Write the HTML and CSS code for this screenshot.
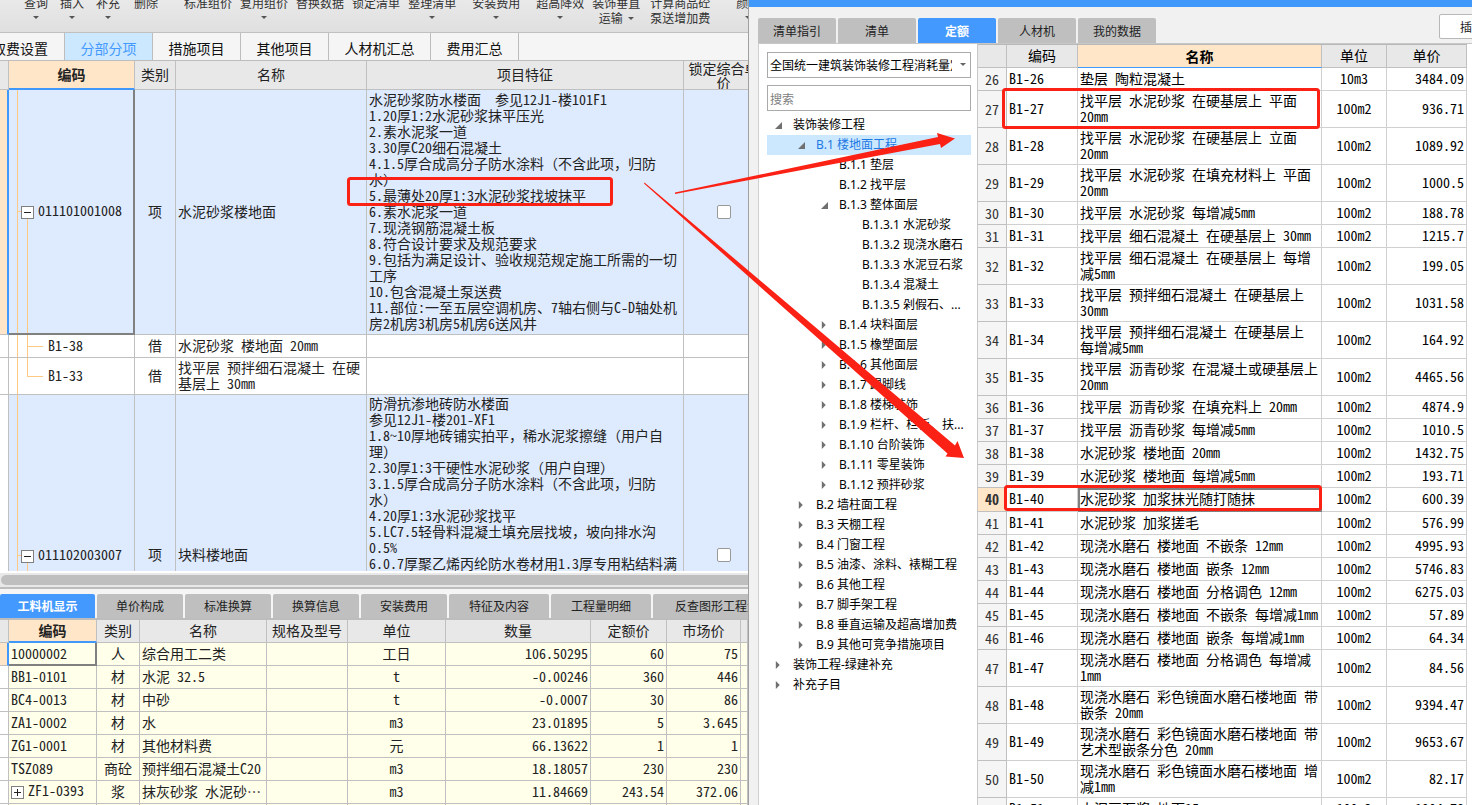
FILE: index.html
```html
<!DOCTYPE html>
<html lang="zh-CN">
<head>
<meta charset="utf-8">
<title>分部分项</title>
<link rel="stylesheet" href="styles.css">
</head>
<body>
<main class="app">
  <section class="editor">
    <header class="toolbar">
      <div class="group g12"><button class="drop">查询</button><button class="drop">插入</button><button class="drop">补充</button></div>
      <div class="group ml14"><button>删除</button></div>
      <div class="group g8 ml26"><button>标准组价</button><button class="drop">复用组价</button><button>替换数据</button><button>锁定清单</button><button class="drop">整理清单</button></div>
      <div class="group g16 ml16"><button class="drop">安装费用</button><button class="drop">超高降效</button></div>
      <div class="group g10 ml8"><button class="side">装饰垂直<br>运输</button><button>计算商品砼<br>泵送增加费</button></div>
      <div class="group ml26"><button class="drop">颜色</button></div>
    </header>
    <nav class="pages">
      <button class="first">取费设置</button><button class="on">分部分项</button><button>措施项目</button><button>其他项目</button><button class="wide">人材机汇总</button><button>费用汇总</button>
    </nav>
    <div class="bill">
      <table class="grid bill-grid">
        <colgroup><col class="w9"><col class="w126"><col class="w41"><col><col class="w317"><col class="w80"></colgroup>
        <thead><tr><th></th><th class="cur">编码</th><th>类别</th><th>名称</th><th>项目特征</th><th class="two">锁定综合单<br>价</th></tr></thead>
        <tbody>
          <tr class="item big"><td class="mark"></td><td class="node parent active"><button class="box" aria-label="折叠"><svg viewBox="0 0 11 11"><path d="M2 5.5h7"/></svg></button>011101001008</td><td class="c">项</td><td>水泥砂浆楼地面</td>
            <td>水泥砂浆防水楼面　参见12J1-楼101F1<br>1.20厚1:2水泥砂浆抹平压光<br>2.素水泥浆一道<br>3.30厚C20细石混凝土<br>4.1.5厚合成高分子防水涂料（不含此项，归防<br>水）<br>5.最薄处20厚1:3水泥砂浆找坡抹平<br>6.素水泥浆一道<br>7.现浇钢筋混凝土板<br>8.符合设计要求及规范要求<br>9.包括为满足设计、验收规范规定施工所需的一切<br>工序<br>10.包含混凝土泵送费<br>11.部位:一至五层空调机房、7轴右侧与C-D轴处机<br>房2机房3机房5机房6送风井</td>
            <td class="c"><input type="checkbox" aria-label="锁定综合单价"></td></tr>
          <tr><td></td><td class="node child">B1-38</td><td class="c">借</td><td>水泥砂浆 楼地面 20mm</td><td></td><td></td></tr>
          <tr class="double"><td></td><td class="node child last">B1-33</td><td class="c">借</td><td>找平层 预拌细石混凝土 在硬<br>基层上 30mm</td><td></td><td></td></tr>
          <tr class="item huge"><td class="plain"></td><td class="node parent"><button class="box" aria-label="折叠"><svg viewBox="0 0 11 11"><path d="M2 5.5h7"/></svg></button>011102003007</td><td class="c">项</td><td>块料楼地面</td>
            <td class="top">防滑抗渗地砖防水楼面<br>参见12J1-楼201-XF1<br>1.8~10厚地砖铺实拍平，稀水泥浆擦缝（用户自<br>理）<br>2.30厚1:3干硬性水泥砂浆（用户自理）<br>3.1.5厚合成高分子防水涂料（不含此项，归防<br>水）<br>4.20厚1:3水泥砂浆找平<br>5.LC7.5轻骨料混凝土填充层找坡，坡向排水沟<br>0.5%<br>6.0.7厚聚乙烯丙纶防水卷材用1.3厚专用粘结料满</td>
            <td class="c"><input type="checkbox" aria-label="锁定综合单价"></td></tr>
        </tbody>
      </table>
    </div>
    <div class="scroll"><div class="thumb"></div></div>
    <section class="detail">
      <nav class="subtabs"><button class="on">工料机显示</button><button>单价构成</button><button>标准换算</button><button>换算信息</button><button>安装费用</button><button class="wide">特征及内容</button><button class="wide">工程量明细</button><button class="wider">反查图形工程量</button></nav>
      <table class="grid res-grid">
        <colgroup><col class="w9"><col class="w88"><col class="w43"><col class="w127"><col class="w81"><col class="w98"><col><col class="w76"><col class="w74"><col class="w7"></colgroup>
        <thead><tr><th></th><th class="cur">编码</th><th>类别</th><th>名称</th><th>规格及型号</th><th>单位</th><th>数量</th><th>定额价</th><th>市场价</th><th></th></tr></thead>
        <tbody>
          <tr><td class="mark"></td><td class="active">10000002</td><td class="c">人</td><td>综合用工二类</td><td></td><td class="c">工日</td><td class="r">106.50295</td><td class="r">60</td><td class="r">75</td><td></td></tr>
          <tr><td></td><td>BB1-0101</td><td class="c">材</td><td>水泥 32.5</td><td></td><td class="c">t</td><td class="r">-0.00246</td><td class="r">360</td><td class="r">446</td><td></td></tr>
          <tr><td></td><td>BC4-0013</td><td class="c">材</td><td>中砂</td><td></td><td class="c">t</td><td class="r">-0.0007</td><td class="r">30</td><td class="r">86</td><td></td></tr>
          <tr><td></td><td>ZA1-0002</td><td class="c">材</td><td>水</td><td></td><td class="c">m3</td><td class="r">23.01895</td><td class="r">5</td><td class="r">3.645</td><td></td></tr>
          <tr><td></td><td>ZG1-0001</td><td class="c">材</td><td>其他材料费</td><td></td><td class="c">元</td><td class="r">66.13622</td><td class="r">1</td><td class="r">1</td><td></td></tr>
          <tr><td></td><td>TSZ089</td><td class="c">商砼</td><td>预拌细石混凝土C20</td><td></td><td class="c">m3</td><td class="r">18.18057</td><td class="r">230</td><td class="r">230</td><td></td></tr>
          <tr><td></td><td><button class="box" aria-label="展开"><svg viewBox="0 0 11 11"><path d="M2 5.5h7M5.5 2v7"/></svg></button>ZF1-0393</td><td class="c">浆</td><td>抹灰砂浆 水泥砂⋯</td><td></td><td class="c">m3</td><td class="r">11.84669</td><td class="r">243.54</td><td class="r">372.06</td><td></td></tr>
          <tr><td></td><td></td><td></td><td></td><td></td><td></td><td></td><td></td><td></td><td></td></tr>
        </tbody>
      </table>
    </section>
  </section>

  <section class="dialog">
    <div class="titlebar"></div>
    <div class="dialog-head">
      <nav class="dtabs"><button>清单指引</button><button>清单</button><button class="on">定额</button><button>人材机</button><button>我的数据</button></nav>
      <button class="insert">插入</button>
    </div>
    <div class="dialog-body">
      <aside class="side-tree">
        <div class="combo"><select aria-label="定额库"><option>全国统一建筑装饰装修工程消耗量定额</option></select></div>
        <input class="search" type="text" placeholder="搜索" aria-label="搜索">
        <ul class="tree">
          <li class="l0"><i class="open"></i>装饰装修工程</li>
          <li class="l1 sel"><i class="open"></i>B.1 楼地面工程</li>
          <li class="l2"><i></i>B.1.1 垫层</li>
          <li class="l2"><i></i>B.1.2 找平层</li>
          <li class="l2"><i class="open"></i>B.1.3 整体面层</li>
          <li class="l3"><i></i>B.1.3.1 水泥砂浆</li>
          <li class="l3"><i></i>B.1.3.2 现浇水磨石</li>
          <li class="l3"><i></i>B.1.3.3 水泥豆石浆</li>
          <li class="l3"><i></i>B.1.3.4 混凝土</li>
          <li class="l3"><i></i>B.1.3.5 剁假石、...</li>
          <li class="l2"><i class="shut"></i>B.1.4 块料面层</li>
          <li class="l2"><i class="shut"></i>B.1.5 橡塑面层</li>
          <li class="l2"><i class="shut"></i>B.1.6 其他面层</li>
          <li class="l2"><i class="shut"></i>B.1.7 踢脚线</li>
          <li class="l2"><i class="shut"></i>B.1.8 楼梯装饰</li>
          <li class="l2"><i class="shut"></i>B.1.9 栏杆、栏板、扶...</li>
          <li class="l2"><i class="shut"></i>B.1.10 台阶装饰</li>
          <li class="l2"><i class="shut"></i>B.1.11 零星装饰</li>
          <li class="l2"><i class="shut"></i>B.1.12 预拌砂浆</li>
          <li class="l1"><i class="shut"></i>B.2 墙柱面工程</li>
          <li class="l1"><i class="shut"></i>B.3 天棚工程</li>
          <li class="l1"><i class="shut"></i>B.4 门窗工程</li>
          <li class="l1"><i class="shut"></i>B.5 油漆、涂料、裱糊工程</li>
          <li class="l1"><i class="shut"></i>B.6 其他工程</li>
          <li class="l1"><i class="shut"></i>B.7 脚手架工程</li>
          <li class="l1"><i class="shut"></i>B.8 垂直运输及超高增加费</li>
          <li class="l1"><i class="shut"></i>B.9 其他可竞争措施项目</li>
          <li class="l0"><i class="shut"></i>装饰工程-绿建补充</li>
          <li class="l0"><i class="shut"></i>补充子目</li>
        </ul>
      </aside>
      <div class="quota">
        <table class="grid quota-grid">
          <colgroup><col class="w29"><col class="w71"><col><col class="w65"><col class="w80"></colgroup>
          <thead><tr><th></th><th>编码</th><th class="cur">名称</th><th>单位</th><th>单价</th></tr></thead>
          <tbody>
            <tr><th>26</th><td>B1-26</td><td>垫层 陶粒混凝土</td><td class="c">10m3</td><td class="r">3484.09</td></tr>
            <tr class="double"><th>27</th><td>B1-27</td><td>找平层 水泥砂浆 在硬基层上 平面<br>20mm</td><td class="c">100m2</td><td class="r">936.71</td></tr>
            <tr class="double"><th>28</th><td>B1-28</td><td>找平层 水泥砂浆 在硬基层上 立面<br>20mm</td><td class="c">100m2</td><td class="r">1089.92</td></tr>
            <tr class="double"><th>29</th><td>B1-29</td><td>找平层 水泥砂浆 在填充材料上 平面<br>20mm</td><td class="c">100m2</td><td class="r">1000.5</td></tr>
            <tr><th>30</th><td>B1-30</td><td>找平层 水泥砂浆 每增减5mm</td><td class="c">100m2</td><td class="r">188.78</td></tr>
            <tr><th>31</th><td>B1-31</td><td>找平层 细石混凝土 在硬基层上 30mm</td><td class="c">100m2</td><td class="r">1215.7</td></tr>
            <tr class="double"><th>32</th><td>B1-32</td><td>找平层 细石混凝土 在硬基层上 每增<br>减5mm</td><td class="c">100m2</td><td class="r">199.05</td></tr>
            <tr class="double"><th>33</th><td>B1-33</td><td>找平层 预拌细石混凝土 在硬基层上<br>30mm</td><td class="c">100m2</td><td class="r">1031.58</td></tr>
            <tr class="double"><th>34</th><td>B1-34</td><td>找平层 预拌细石混凝土 在硬基层上<br>每增减5mm</td><td class="c">100m2</td><td class="r">164.92</td></tr>
            <tr class="double"><th>35</th><td>B1-35</td><td>找平层 沥青砂浆 在混凝土或硬基层上<br>20mm</td><td class="c">100m2</td><td class="r">4465.56</td></tr>
            <tr><th>36</th><td>B1-36</td><td>找平层 沥青砂浆 在填充料上 20mm</td><td class="c">100m2</td><td class="r">4874.9</td></tr>
            <tr><th>37</th><td>B1-37</td><td>找平层 沥青砂浆 每增减5mm</td><td class="c">100m2</td><td class="r">1010.5</td></tr>
            <tr><th>38</th><td>B1-38</td><td>水泥砂浆 楼地面 20mm</td><td class="c">100m2</td><td class="r">1432.75</td></tr>
            <tr><th>39</th><td>B1-39</td><td>水泥砂浆 楼地面 每增减5mm</td><td class="c">100m2</td><td class="r">193.71</td></tr>
            <tr><th class="now">40</th><td>B1-40</td><td class="focus">水泥砂浆 加浆抹光随打随抹</td><td class="c">100m2</td><td class="r">600.39</td></tr>
            <tr><th>41</th><td>B1-41</td><td>水泥砂浆 加浆搓毛</td><td class="c">100m2</td><td class="r">576.99</td></tr>
            <tr><th>42</th><td>B1-42</td><td>现浇水磨石 楼地面 不嵌条 12mm</td><td class="c">100m2</td><td class="r">4995.93</td></tr>
            <tr><th>43</th><td>B1-43</td><td>现浇水磨石 楼地面 嵌条 12mm</td><td class="c">100m2</td><td class="r">5746.83</td></tr>
            <tr><th>44</th><td>B1-44</td><td>现浇水磨石 楼地面 分格调色 12mm</td><td class="c">100m2</td><td class="r">6275.03</td></tr>
            <tr><th>45</th><td>B1-45</td><td>现浇水磨石 楼地面 不嵌条 每增减1mm</td><td class="c">100m2</td><td class="r">57.89</td></tr>
            <tr><th>46</th><td>B1-46</td><td>现浇水磨石 楼地面 嵌条 每增减1mm</td><td class="c">100m2</td><td class="r">64.34</td></tr>
            <tr class="double"><th>47</th><td>B1-47</td><td>现浇水磨石 楼地面 分格调色 每增减<br>1mm</td><td class="c">100m2</td><td class="r">84.56</td></tr>
            <tr class="double"><th>48</th><td>B1-48</td><td>现浇水磨石 彩色镜面水磨石楼地面 带<br>嵌条 20mm</td><td class="c">100m2</td><td class="r">9394.47</td></tr>
            <tr class="double"><th>49</th><td>B1-49</td><td>现浇水磨石 彩色镜面水磨石楼地面 带<br>艺术型嵌条分色 20mm</td><td class="c">100m2</td><td class="r">9653.67</td></tr>
            <tr class="double"><th>50</th><td>B1-50</td><td>现浇水磨石 彩色镜面水磨石楼地面 增<br>减1mm</td><td class="c">100m2</td><td class="r">82.17</td></tr>
            <tr><th>51</th><td>B1-51</td><td>水泥豆石浆 地面15mm</td><td class="c">100m2</td><td class="r">1904.78</td></tr>
          </tbody>
        </table>
      </div>
    </div>
  </section>
</main>
<svg class="notes" viewBox="0 0 1472 805" aria-hidden="true">
  <g fill="none" stroke="#fb2114" stroke-width="3">
    <rect x="348.5" y="178.5" width="263" height="26" rx="2"/>
    <rect x="1003.5" y="89.500" width="315" height="38" rx="2"/>
    <rect x="1005.5" y="486.500" width="315" height="23" rx="2"/>
  </g>
  <g fill="#fb2114">
    <path d="M675 192.500L938 137L937 133L955 138.500L941 148L940 144L675 194Z"/>
    <path d="M644.500 182.500L955 445.500L957.500 441L964 458L945.500 456.500L947.500 453.500L644 183.500Z"/>
  </g>
</svg>
</body>
</html>
```

FILE: styles.css
```css
* { box-sizing: border-box; }
body {
  margin: 0;
  height: 100vh;
  overflow: hidden;
  position: relative;
  background: #f1f1f1;
  color: #222;
  font: 12px/16px "Noto Sans CJK SC", sans-serif;
}
button {
  border: 0;
  padding: 0;
  background: none;
  color: inherit;
  font: inherit;
  white-space: nowrap;
}
.app { display: flex; height: 100%; }
.editor {
  flex: 748 1 0;
  min-width: 0;
  display: flex;
  flex-direction: column;
  overflow: hidden;
  border-right: 1px solid #a0a0a0;
}
.dialog {
  flex: 723 1 0;
  min-width: 0;
  display: flex;
  flex-direction: column;
  overflow: hidden;
  background: #f1f1f1;
}

/* toolbar */
.toolbar {
  flex: 0 0 33px;
  display: flex;
  align-items: flex-start;
  padding-left: 24px;
  overflow: hidden;
  background: linear-gradient(#e9e9e9, #dfdfdf);
  border-bottom: 1px solid #c0c0c0;
  color: #333;
}
.group { display: flex; flex: none; margin-top: -5px; }
.group button { line-height: 15px; display: block; text-align: center; align-self: flex-start; }
.g8 { gap: 8px; }
.g10 { gap: 10px; }
.g12 { gap: 12px; }
.g16 { gap: 16px; }
.ml8 { margin-left: 8px; }
.ml14 { margin-left: 14px; }
.ml16 { margin-left: 16px; }
.ml26 { margin-left: 26px; }
.drop::after, .side::after {
  content: "";
  display: block;
  width: 0;
  margin: 6px auto 0;
  border: 3px solid transparent;
  border-top-color: #555;
  border-bottom: 0;
}
.side::after { display: inline-block; margin: 0 0 3px 5px; }

/* page tabs */
.pages {
  flex: 0 0 28px;
  display: flex;
  background: #f5f5f5;
  border-bottom: 1px solid #bdbdbd;
  font-size: 14px;
  color: #111;
}
.pages button { flex: 0 0 88px; border-right: 1px solid #bdbdbd; padding-top: 3px; }
.pages .first {
  flex-basis: 65px;
  min-width: 0;
  overflow: hidden;
  direction: rtl;
  text-align: right;
  padding-right: 16px;
  display: flex;
  justify-content: flex-start;
  align-items: center;
}
.pages .wide { flex-basis: 102px; }
.pages .on { background: #cce8ff; color: #4499ff; }

/* grids */
.grid {
  width: 100%;
  table-layout: fixed;
  border-spacing: 0;
  font: 14px/16px "Noto Sans Mono CJK SC", "Liberation Serif", "Noto Sans CJK SC", serif;
}
.grid th, .grid td {
  height: 23px;
  padding: 0 2px 3px;
  border-right: 1px solid #c0c0c0;
  border-bottom: 1px solid #c0c0c0;
  white-space: nowrap;
  overflow: hidden;
  text-align: left;
  vertical-align: middle;
}
.grid th { background: #e8e8e8; font-weight: 400; text-align: center; padding: 0 0 2px; }
.grid .cur { background: #ffe6c8; font-weight: 700; border-bottom: 2px solid #4098fa; padding-bottom: 1px; }
.grid .c { text-align: center; }
.grid .r { text-align: right; }
.grid .top { vertical-align: top; }
.grid .double td { height: 37px; }
.w7 { width: 7px; }
.w9 { width: 9px; }
.w29 { width: 29px; }
.w41 { width: 41px; }
.w43 { width: 43px; }
.w65 { width: 65px; }
.w71 { width: 71px; }
.w74 { width: 74px; }
.w76 { width: 76px; }
.w80 { width: 80px; }
.w81 { width: 81px; }
.w88 { width: 88px; }
.w98 { width: 98px; }
.w126 { width: 126px; }
.w127 { width: 127px; }
.w317 { width: 317px; }

.bill { flex: 1 1 0; min-height: 0; overflow: hidden; background: #fff; border-bottom: 2px solid #fff; }
.bill-grid { width: calc(100% + 16px); }
.bill-grid thead th { height: 29px; }
.bill-grid .two { line-height: 14px; padding: 0; }
.bill-grid .item td { background-color: #deeafe; }
.bill-grid .item .plain { background: #fff; }
.bill-grid .big td { height: 245px; }
.bill-grid .huge td { height: 322px; }
.grid .mark, .bill-grid .item .mark { background: #ffe6c8; border-right: 2px solid #4098fa; }
.grid .active { border-right: 2px solid #808080; border-bottom: 2px solid #808080; padding-bottom: 2px; }
.bill-grid .node {
  background-image: linear-gradient(#ffc983, #ffc983), linear-gradient(#ffc983, #ffc983), linear-gradient(#ffc983, #ffc983);
  background-repeat: no-repeat;
}
.bill-grid .parent {
  padding-left: 12px;
  background-size: 1px 100%, 1px 50%, 5px 1px;
  background-position: 8px 0, 18px 100%, 8px 50%;
}
.bill-grid .child {
  padding-left: 39px;
  background-size: 1px 100%, 1px 100%, 16px 1px;
  background-position: 8px 0, 18px 0, 18px 50%;
}
.bill-grid .last { background-size: 1px 100%, 1px 50%, 16px 1px; }
.box {
  display: inline-block;
  width: 13px;
  height: 13px;
  margin-right: 4px;
  background: #fff;
  border: 1px solid #808080;
  vertical-align: -2px;
}
.box svg { display: block; width: 11px; height: 11px; fill: none; stroke: #222; }
input[type="checkbox"] {
  appearance: none;
  display: block;
  width: 14px;
  height: 14px;
  margin: 2px auto 0;
  background: #fff;
  border: 1px solid #999;
  border-radius: 2px;
}

.scroll { flex: 0 0 16px; padding: 2px 0 2px 1px; background: #e8e8e8; border-bottom: 2px solid #bdbdbd; }
.thumb { height: 10px; background: #bfbfbf; border-radius: 5px 0 0 5px; }

.detail { flex: 0 0 216px; overflow: hidden; background: #f5f5f5; padding-top: 5px; }
.subtabs { display: flex; gap: 2px; border-bottom: 2px solid #bdbdbd; }
.subtabs button { flex: 0 0 86px; height: 24px; background: #bfbfbf; border-radius: 2px 2px 0 0; }
.subtabs .wide { flex-basis: 100px; }
.subtabs .wider { flex-basis: 128px; }
.subtabs .on { flex-basis: 95px; background: #4499ff; color: #fff; font-weight: 700; }
.res-grid td { background: #ffffea; }
.res-grid td:first-child { background: #fff; }
.res-grid td.mark { background: #ffe6c8; }

/* quota dialog */
.titlebar { flex: 0 0 7px; background: #4098fa; }
.dialog-head { flex: 0 0 36px; display: flex; justify-content: space-between; padding-left: 9px; overflow: hidden; }
.dtabs { display: flex; gap: 2px; padding-top: 11px; }
.dtabs button { width: 78px; height: 25px; background: #bfbfbf; border-radius: 2px 2px 0 0; }
.dtabs .on { background: #4499ff; color: #fff; font-weight: 700; }
.insert {
  width: 66px;
  height: 25px;
  margin: 7px -33px 0 0;
  background: #fff;
  border: 1px solid #b8b8b8;
  border-radius: 2px;
}
.dialog-body {
  flex: 1;
  min-height: 0;
  display: flex;
  margin: 0 0 0 9px;
  padding-right: 5px;
  background: #fff;
  border-top: 1px solid #c8c8c8;
  border-left: 1px solid #d0d0d0;
}
.side-tree { flex: 0 0 219px; padding: 8px 6px 0 8px; border-right: 1px solid #c8c8c8; overflow: hidden; }
.combo { position: relative; }
.combo::after {
  content: "";
  position: absolute;
  right: 5px;
  top: 11px;
  border: 3px solid transparent;
  border-top-color: #666;
  border-bottom: 0;
}
.combo select {
  display: block;
  width: 100%;
  height: 26px;
  padding: 0 18px 0 2px;
  appearance: none;
  background: #fff;
  border: 1px solid #aaa;
  border-radius: 0;
  color: #000;
  font: inherit;
}
.search {
  display: block;
  width: 100%;
  height: 26px;
  margin: 7px 0 4px;
  padding: 0 2px;
  border: 1px solid #aaa;
  background: #fff;
  font: inherit;
}
.search::placeholder { color: #808080; }
.tree { list-style: none; margin: 0; padding: 0; color: #000; font-family: "Noto Sans", "Noto Sans CJK SC", sans-serif; }
.tree li { display: flex; align-items: center; height: 20px; white-space: nowrap; }
.tree .l0 { padding-left: 8px; }
.tree .l1 { padding-left: 31px; }
.tree .l2 { padding-left: 54px; }
.tree .l3 { padding-left: 77px; }
.tree .sel { background: #cce8ff; color: #1c78e4; }
.tree i { flex: none; width: 7px; height: 8px; margin-right: 11px; }
.tree .open { background: #707070; clip-path: polygon(100% 12%, 100% 100%, 0 100%); }
.tree .shut { background: #707070; clip-path: polygon(12% 0, 68% 50%, 12% 100%); }
.quota { flex: 1; min-width: 0; overflow: hidden; border-top: 1px solid #b8b8b8; }
.quota-grid { color: #000; }
.quota-grid td { border-color: #d0d0d0; }
.quota-grid tbody th { background: #f5f5f5; color: #333; padding-bottom: 1px; }
.quota-grid .cur { border-bottom-width: 1px; }
.quota-grid tbody .now { background: #ffe6c8; font-weight: 700; }
.quota-grid .focus { border: 2px solid #808080; padding: 0 0 4px; }

.notes { position: absolute; top: 0; left: 0; width: 100%; height: 100%; pointer-events: none; }
```
